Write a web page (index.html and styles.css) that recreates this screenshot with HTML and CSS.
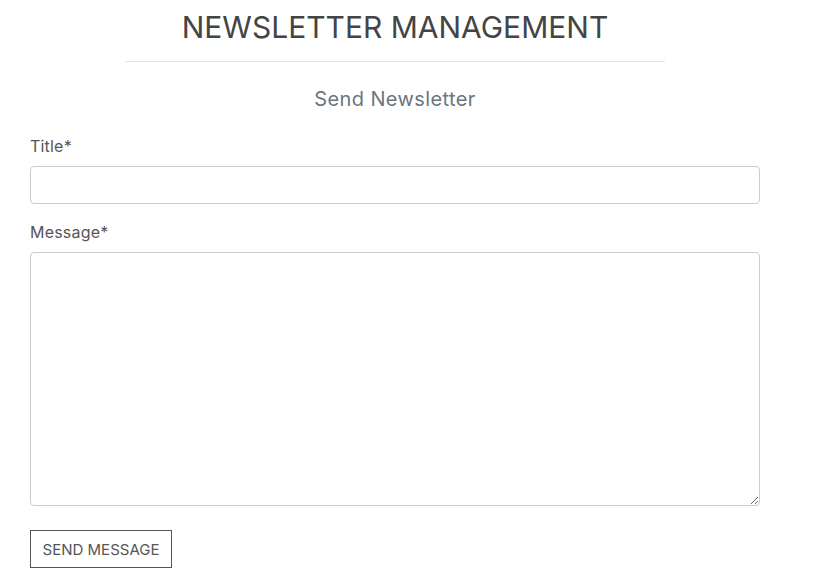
FILE: index.html
```html
<!DOCTYPE html>
<html>
<head>
<meta charset="utf-8">
<link rel="stylesheet" href="styles.css">
</head>
<body>
<div class="page">
  <h1 class="title">NEWSLETTER MANAGEMENT</h1>
  <hr class="divider">
  <h2 class="subtitle">Send Newsletter</h2>
  <form class="form">
    <label class="label" for="t">Title*</label>
    <input class="input" id="t" type="text">
    <label class="label label-msg" for="m">Message*</label>
    <textarea class="textarea" id="m"></textarea>
    <button class="btn" type="button">SEND MESSAGE</button>
  </form>
</div>
</body>
</html>
```
FILE: styles.css
```css
html, body { margin: 0; padding: 0; background: #fff; }
body { font-family: "Inter", "Open Sans", sans-serif; color: #555; }
.page { width: 730px; margin-left: 30px; display: flex; flex-direction: column; }
.title { margin: 8px 0 0; font-size: 30px; font-weight: 400; color: #444; text-align: center; letter-spacing: 0; line-height: 38px; }
.divider { width: 540px; margin: 15px auto 0; border: 0; border-top: 1px solid #e2e2e2; height: 0; }
.subtitle { margin: 24px 0 0; font-size: 20px; font-weight: 400; color: #6c757d; text-align: center; line-height: 26px; letter-spacing: 0.4px; }
.form { display: flex; flex-direction: column; margin-top: 23px; }
.label { font-size: 16px; color: #555; line-height: 22px; letter-spacing: 0.2px; }
.label-msg { margin-top: 17px; }
.input { margin-top: 9px; height: 38px; box-sizing: border-box; border: 1px solid #ccc; border-radius: 4px; padding: 6px 12px; font: inherit; }
.textarea { margin-top: 9px; height: 254px; box-sizing: border-box; border: 1px solid #ccc; border-radius: 4px; padding: 6px 12px; font: inherit; resize: vertical; }
.btn { align-self: flex-start; margin-top: 24px; height: 38px; width: 142px; box-sizing: border-box; background: #fff; border: 1px solid #555; border-radius: 0; font-family: inherit; font-size: 15px; color: #555; padding: 0; }
```
